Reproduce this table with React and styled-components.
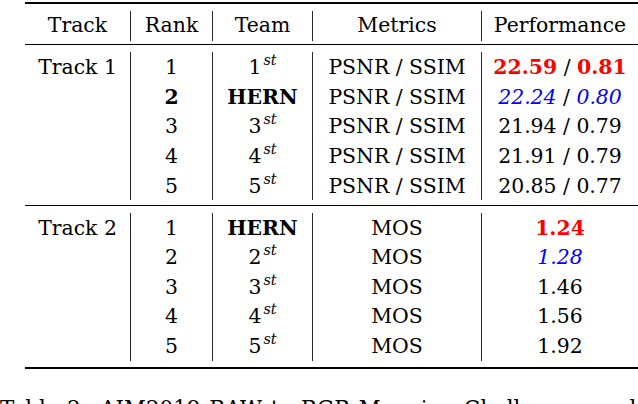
import styled, { createGlobalStyle } from "styled-components";

const GlobalStyle = createGlobalStyle`
  html, body {
    margin: 0;
    padding: 0;
    background: #ffffff;
  }
`;

// Liberation Serif is not picked up in this sandbox; DejaVu Serif, a bit smaller, keeps Times-like widths
const SERIF = `"DejaVu Serif", "Liberation Serif", serif`;
const COLS = "105px 82px 100px 169px 157px";

const Page = styled.div`
  width: 638px;
  height: 404px;
  overflow: hidden;
  padding-top: 2px;
  box-sizing: border-box;
  font-family: ${SERIF};
  color: #000000;
`;

const Table = styled.div`
  margin-left: 25px;
  width: 613px;
`;

const Rule = styled.div`
  height: ${(p) => p.$thick}px;
  background: #000000;
  margin-top: ${(p) => p.$above || 0}px;
  margin-bottom: ${(p) => p.$below || 0}px;
`;

const Section = styled.div`
  display: grid;
  grid-template-columns: ${COLS};
  grid-auto-rows: 29.6px;
  font-size: 20.4px;
`;

const Cell = styled.div`
  text-align: center;
  white-space: nowrap;
  line-height: ${(p) => (p.$head ? "28.4px" : "29.6px")};
  padding-top: ${(p) => (p.$head ? "0" : "1.1px")};
  border-left: ${(p) => (p.$first ? "none" : "1px solid #2a2a2a")};
`;

const Bold = styled.span`
  font-weight: bold;
`;

const Sup = styled.sup`
  font-size: 14.4px;
  font-style: italic;
  line-height: 0;
  vertical-align: 9px;
  margin-left: 2px;
`;

const Best = styled.span`
  color: #ff0000;
  font-weight: bold;
`;

const Second = styled.span`
  color: #0000ff;
  font-style: italic;
`;

const Caption = styled.div`
  margin-top: 24px;
  font-size: 21.4px;
  line-height: 32px;
  white-space: nowrap;
  word-spacing: 2px;
`;

const Gap = styled.span`
  display: inline-block;
  width: 12px;
`;

function Ordinal({ n }) {
  return (
    <>
      {n}
      <Sup>st</Sup>
    </>
  );
}

const track1 = [
  { rank: "1", team: <Ordinal n="1" />, perf: <><Best>22.59</Best> / <Best>0.81</Best></> },
  { rank: <Bold>2</Bold>, team: <Bold>HERN</Bold>, perf: <><Second>22.24</Second> / <Second>0.80</Second></> },
  { rank: "3", team: <Ordinal n="3" />, perf: "21.94 / 0.79" },
  { rank: "4", team: <Ordinal n="4" />, perf: "21.91 / 0.79" },
  { rank: "5", team: <Ordinal n="5" />, perf: "20.85 / 0.77" },
];

const track2 = [
  { rank: "1", team: <Bold>HERN</Bold>, perf: <Best>1.24</Best> },
  { rank: "2", team: <Ordinal n="2" />, perf: <Second>1.28</Second> },
  { rank: "3", team: <Ordinal n="3" />, perf: "1.46" },
  { rank: "4", team: <Ordinal n="4" />, perf: "1.56" },
  { rank: "5", team: <Ordinal n="5" />, perf: "1.92" },
];

function Body({ label, metric, rows }) {
  return (
    <Section>
      {rows.map((r, i) => (
        <div key={i} style={{ display: "contents" }}>
          <Cell $first>{i === 0 ? label : ""}</Cell>
          <Cell>{r.rank}</Cell>
          <Cell>{r.team}</Cell>
          <Cell>{metric}</Cell>
          <Cell>{r.perf}</Cell>
        </div>
      ))}
    </Section>
  );
}

export default function App() {
  return (
    <>
      <GlobalStyle />
      <Page>
        <Table>
          <Rule $thick={2} $below={7} />
          <Section>
            <Cell $head $first>Track</Cell>
            <Cell $head>Rank</Cell>
            <Cell $head>Team</Cell>
            <Cell $head>Metrics</Cell>
            <Cell $head>Performance</Cell>
          </Section>
          <Rule $thick={1} $above={3.5} $below={7} />
          <Body label="Track 1" metric="PSNR / SSIM" rows={track1} />
          <Rule $thick={1} $above={4.5} $below={7} />
          <Body label="Track 2" metric="MOS" rows={track2} />
          <Rule $thick={2} $above={6} />
        </Table>
        <Caption>
          Table 2:<Gap />AIM2019 RAW to RGB Mapping Challenge results
        </Caption>
      </Page>
    </>
  );
}
